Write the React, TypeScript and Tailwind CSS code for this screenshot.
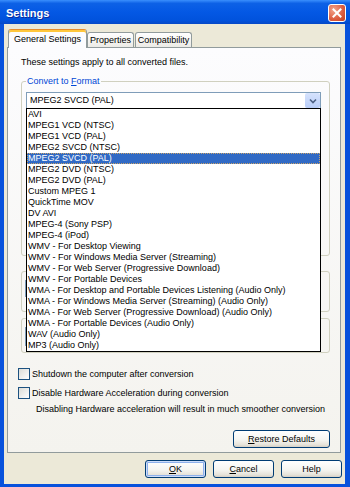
import type { ReactNode } from 'react';

const FORMATS = [
  'AVI',
  'MPEG1 VCD (NTSC)',
  'MPEG1 VCD (PAL)',
  'MPEG2 SVCD (NTSC)',
  'MPEG2 SVCD (PAL)',
  'MPEG2 DVD (NTSC)',
  'MPEG2 DVD (PAL)',
  'Custom MPEG 1',
  'QuickTime MOV',
  'DV AVI',
  'MPEG-4 (Sony PSP)',
  'MPEG-4 (iPod)',
  'WMV - For Desktop Viewing',
  'WMV - For Windows Media Server (Streaming)',
  'WMV - For Web Server (Progressive Download)',
  'WMV - For Portable Devices',
  'WMA - For Desktop and Portable Devices Listening (Audio Only)',
  'WMA - For Windows Media Server (Streaming) (Audio Only)',
  'WMA - For Web Server (Progressive Download) (Audio Only)',
  'WMA - For Portable Devices (Audio Only)',
  'WAV (Audio Only)',
  'MP3 (Audio Only)',
];

const SELECTED = 'MPEG2 SVCD (PAL)';

function XpButton({ children, isDefault, className = '' }: { children: ReactNode; isDefault?: boolean; className?: string }) {
  return (
    <button
      className={`h-[18px] rounded-[3px] border border-[#003C74] bg-[linear-gradient(180deg,#ffffff_0%,#f5f5f1_55%,#e6e3da_85%,#d6d0c5_100%)] flex items-center justify-center text-[9px] leading-[11px] text-black ${
        isDefault ? 'shadow-[inset_0_0_0_1px_#cddcf9,inset_0_0_0_2px_#8eb1ec]' : ''
      } ${className}`}
    >
      {children}
    </button>
  );
}

function Checkbox() {
  return <div className="w-[12px] h-[12px] shrink-0 border border-[#1C5180] bg-[linear-gradient(135deg,#dcdcd7,#ffffff)]" />;
}

export default function App() {
  return (
    <div className="w-[350px] h-[487px] flex flex-col bg-[#0852dc] font-['Liberation_Sans',Arial,sans-serif] text-[9px] leading-[11px] text-black select-none">
      {/* Title bar */}
      <div className="h-[24px] shrink-0 flex items-center pt-[2px] pl-[6px] pr-[4px] bg-[linear-gradient(180deg,#3a8ffd_0%,#0d61e6_14%,#0458e4_50%,#0152dc_85%,#0648c6_100%)]">
        <span className="text-white font-bold text-[11px] leading-[13px] [text-shadow:1px_1px_0_#0c2a9a]">Settings</span>
        <div className="ml-auto w-[18px] h-[18px] rounded-[3px] border border-white bg-[radial-gradient(circle_at_30%_30%,#f2a48c,#dc5c3f_60%,#c4411f)] flex items-center justify-center">
          <svg width="12" height="12" viewBox="0 0 12 12">
            <path d="M2.5 2.5 L9.5 9.5 M9.5 2.5 L2.5 9.5" stroke="white" strokeWidth="2" strokeLinecap="square" />
          </svg>
        </div>
      </div>

      {/* Dialog body */}
      <div className="flex-1 ml-[4px] mr-[5px] mb-[3px] bg-[#ECE9D8] flex flex-col pl-[3px] pt-[5px] pb-[6px]">
        {/* Tabs */}
        <div className="h-[18px] flex items-end pl-[1px] relative z-10">
          <div className="w-[79px] h-[19px] -mb-px rounded-t-[3px] border-x border-t border-[#919B9C] border-t-[#E68B2C] shadow-[inset_0_2px_0_#ffc73c] bg-[#FCFCFE] flex items-center justify-center pt-[1px]">
            General Settings
          </div>
          <div className="w-[47px] h-[15px] rounded-t-[3px] border-x border-t border-[#919B9C] bg-[linear-gradient(180deg,#ffffff,#ecebe6)] flex items-center justify-center">
            Properties
          </div>
          <div className="ml-[1px] w-[57px] h-[15px] rounded-t-[3px] border-x border-t border-[#919B9C] bg-[linear-gradient(180deg,#ffffff,#ecebe6)] flex items-center justify-center">
            Compatibility
          </div>
        </div>

        {/* Tab panel */}
        <div className="w-[334px] h-[406px] border border-[#919B9C] bg-[linear-gradient(180deg,#fcfcfe,#f4f3ee)] flex flex-col">
          <p className="mt-[9px] ml-[13px]">These settings apply to all converted files.</p>

          {/* Convert to Format */}
          <fieldset className="mt-[8px] ml-[13px] w-[309px] h-[180px] px-[4px] border border-[#D0D0BF] rounded-[3px]">
            <legend className="px-[1px] text-[#0046D5]">
              Convert to <span className="underline">F</span>ormat
            </legend>
            <div className="relative mt-[5px] w-[295px] h-[17px] border border-[#7F9DB9] bg-white flex items-center pl-[3px]">
              <span>{SELECTED}</span>
              <div className="ml-auto w-[15px] h-full rounded-[2px] bg-[linear-gradient(180deg,#d6e3fd,#b9cdf8)] flex items-center justify-center">
                <svg width="8" height="6" viewBox="0 0 8 6">
                  <path d="M1 1.5 L4 4.5 L7 1.5" stroke="#4D6185" strokeWidth="1.6" fill="none" />
                </svg>
              </div>

              {/* Open list */}
              <div className="absolute left-[-1px] top-[15px] w-[295px] z-20 border border-black bg-white">
                {FORMATS.map((f) => (
                  <div
                    key={f}
                    className={`h-[11px] pl-[1px] leading-[11px] whitespace-nowrap overflow-hidden ${
                      f === SELECTED ? 'bg-[#316AC5] text-white outline-1 outline-dotted outline-offset-[-1px] outline-[#c9a36a]' : ''
                    }`}
                  >
                    {f}
                  </div>
                ))}
              </div>
            </div>
          </fieldset>

          <fieldset className="mt-[15px] ml-[13px] w-[309px] h-[41px] px-[3px] pt-[8px] border border-[#D0D0BF] rounded-[3px]">
            <div className="w-[200px] h-[17px] border border-[#7F9DB9] bg-white" />
          </fieldset>

          <fieldset className="mt-[6px] ml-[13px] w-[309px] h-[35px] px-[3px] pt-[8px] border border-[#D0D0BF] rounded-[3px]">
            <div className="w-[200px] h-[19px] border border-[#7F9DB9] bg-white" />
          </fieldset>

          <label className="mt-[15px] ml-[10px] h-[12px] flex items-center gap-[2px]">
            <Checkbox />
            <span>Shutdown the computer after conversion</span>
          </label>
          <label className="mt-[7px] ml-[10px] h-[12px] flex items-center gap-[2px]">
            <Checkbox />
            <span>Disable Hardware Acceleration during conversion</span>
          </label>
          <p className="mt-[5px] ml-[28px]">Disabling Hardware acceleration will result in much smoother conversion</p>

          <XpButton className="mt-[15px] self-end mr-[10px] w-[97px]">
            <span className="underline">R</span>estore Defaults
          </XpButton>
        </div>

        {/* Dialog buttons */}
        <div className="mt-[7px] h-[18px] flex justify-end gap-[7px] pr-[3px]">
          <XpButton isDefault className="w-[61px]">
            <span className="underline">O</span>K
          </XpButton>
          <XpButton className="w-[61px]">
            <span className="underline">C</span>ancel
          </XpButton>
          <XpButton className="w-[61px]">Help</XpButton>
        </div>
      </div>
    </div>
  );
}
